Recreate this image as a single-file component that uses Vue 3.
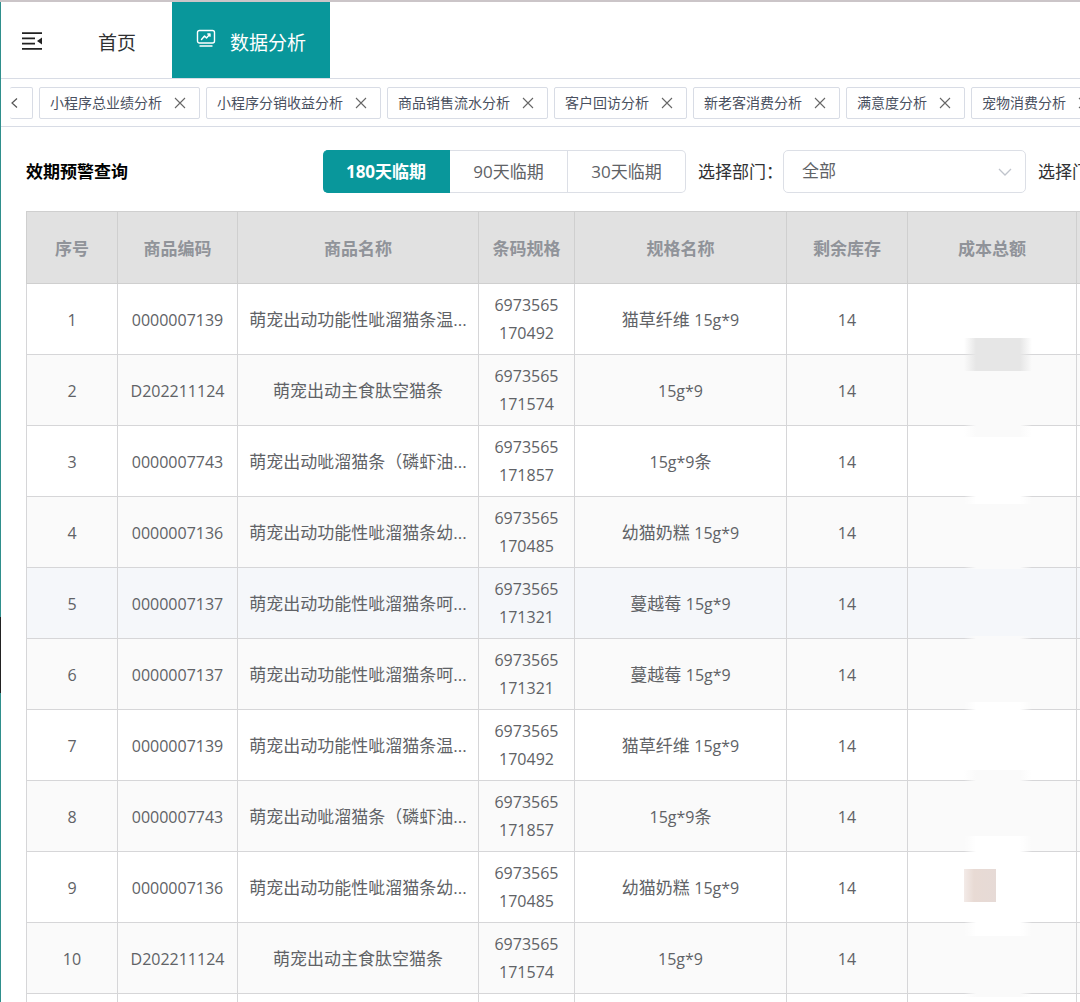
<script setup>
import { ref } from 'vue'

const tags = [
  '小程序总业绩分析',
  '小程序分销收益分析',
  '商品销售流水分析',
  '客户回访分析',
  '新老客消费分析',
  '满意度分析',
  '宠物消费分析',
]

const periods = ['180天临期', '90天临期', '30天临期']
const period = ref('180天临期')
const department = ref('全部')

const columns = ['序号', '商品编码', '商品名称', '条码规格', '规格名称', '剩余库存', '成本总额']

const products = {
  warm: { code: '0000007139', name: '萌宠出动功能性呲溜猫条温...', barcode: '6973565170492', flavor: '猫草纤维', pack: '15g*9', unit: '' },
  peptide: { code: 'D202211124', name: '萌宠出动主食肽空猫条', barcode: '6973565171574', flavor: '', pack: '15g*9', unit: '' },
  krill: { code: '0000007743', name: '萌宠出动呲溜猫条（磷虾油...', barcode: '6973565171857', flavor: '', pack: '15g*9', unit: '条' },
  kitten: { code: '0000007136', name: '萌宠出动功能性呲溜猫条幼...', barcode: '6973565170485', flavor: '幼猫奶糕', pack: '15g*9', unit: '' },
  care: { code: '0000007137', name: '萌宠出动功能性呲溜猫条呵...', barcode: '6973565171321', flavor: '蔓越莓', pack: '15g*9', unit: '' },
}
const rows = ['warm', 'peptide', 'krill', 'kitten', 'care', 'care', 'warm', 'krill', 'kitten', 'peptide']
  .map((key) => ({ ...products[key], stock: 14 }))
const hovered = 4

// Privacy masks over the cost amounts, measured from the top of the table
const masks = [
  { top: 127, height: 33, color: '#e6e6e6' },
  { top: 210, height: 16, color: '#fafafa' },
  { top: 280, height: 13, color: '#ffffff' },
  { top: 352, height: 6, color: '#fafafa' },
  { top: 425, height: 6, color: '#fafafa' },
  { top: 491, height: 12, color: '#ffffff' },
  { top: 559, height: 14, color: '#fafafa' },
  { top: 625, height: 20, color: '#ffffff' },
  { top: 704, height: 21, color: '#ffffff' },
  { top: 780, height: 6, color: '#fafafa' },
]
</script>

<template>
  <div class="app">
    <header class="topbar">
      <button class="fold" aria-label="收起菜单">
        <svg width="20" height="18" viewBox="0 0 20 18">
          <path d="M0 1.2h20M0 6.4h13M0 11.6h13M0 16.8h20" stroke="#222" stroke-width="1.8" fill="none" />
          <path d="M20 5.5v7L15 9z" fill="#222" />
        </svg>
      </button>
      <nav class="menu">
        <a class="menu-item" href="#home">首页</a>
        <a class="menu-item active" href="#analysis">
          <svg width="20" height="20" viewBox="0 0 20 20" fill="none" stroke="#fff" stroke-width="1.4" stroke-linecap="round" stroke-linejoin="round">
            <rect x="1.5" y="1.5" width="17" height="12.5" rx="2" />
            <path d="M5.5 10.5 8.5 7 10.5 9 14 5M11.8 5H14v2.2M4 17h12" />
          </svg>
          <span>数据分析</span>
        </a>
      </nav>
    </header>

    <div class="tagbar">
      <button class="scroll-left" aria-label="向左滚动">
        <svg width="8" height="12" viewBox="0 0 8 12"><path d="M7 1.5 2 6l5 4.5" fill="none" stroke="#555" stroke-width="1.2" /></svg>
      </button>
      <div v-for="tag in tags" :key="tag" class="tag">
        <a href="#tag">{{ tag }}</a>
        <button :aria-label="'关闭' + tag">
          <svg width="12" height="12" viewBox="0 0 12 12"><path d="m1 1 10 10M11 1 1 11" stroke="#666" stroke-width="1.1" /></svg>
        </button>
      </div>
    </div>

    <main class="content">
      <div class="toolbar">
        <h1>效期预警查询</h1>
        <div class="periods">
          <button v-for="p in periods" :key="p" :class="{ on: p === period }" @click="period = p">{{ p }}</button>
        </div>
        <label for="department">选择部门：</label>
        <div class="select">
          <select id="department" v-model="department">
            <option>全部</option>
          </select>
          <svg width="14" height="8" viewBox="0 0 14 8"><path d="m1 1 6 6 6-6" fill="none" stroke="#c0c4cc" stroke-width="1.3" /></svg>
        </div>
        <span class="store-label">选择门店：</span>
      </div>

      <div class="table-wrap">
        <table>
          <colgroup>
            <col class="c-index" />
            <col class="c-code" />
            <col class="c-name" />
            <col class="c-barcode" />
            <col class="c-spec" />
            <col class="c-stock" />
            <col class="c-cost" />
            <col />
          </colgroup>
          <thead>
            <tr>
              <th v-for="c in columns" :key="c">{{ c }}</th>
              <th class="rest"></th>
            </tr>
          </thead>
          <tbody>
            <tr v-for="(row, i) in rows" :key="i" :class="{ hovered: i === hovered }">
              <td class="num">{{ i + 1 }}</td>
              <td class="num">{{ row.code }}</td>
              <td class="name">{{ row.name }}</td>
              <td class="num barcode">{{ row.barcode }}</td>
              <td>{{ row.flavor }} <span class="num">{{ row.pack }}</span>{{ row.unit }}</td>
              <td class="num">{{ row.stock }}</td>
              <td></td>
              <td class="rest"></td>
            </tr>
            <tr>
              <td v-for="c in columns" :key="c"></td>
              <td class="rest"></td>
            </tr>
          </tbody>
        </table>
        <div class="masks" aria-hidden="true">
          <i
            v-for="m in masks"
            :key="m.top"
            class="mask"
            :style="{ top: m.top + 'px', height: m.height + 'px', '--tone': m.color }"
          ></i>
          <i class="mask swatch"></i>
        </div>
      </div>
    </main>
    <i class="edge" aria-hidden="true"></i>
  </div>
</template>

<style>
body {
  margin: 0;
}
</style>

<style scoped>
.app {
  position: relative;
  box-sizing: border-box;
  display: flex;
  flex-direction: column;
  height: 100vh;
  overflow: hidden;
  border-top: 2px solid #cbc5c8;
  background: #fff;
  color: #303133;
  font-family: "Open Sans", "Noto Sans CJK SC", sans-serif;
  font-size: 17px;
}
.app::before {
  content: "";
  position: absolute;
  top: 0;
  bottom: 0;
  left: 0;
  width: 1px;
  background: #2f8f8c;
}
button {
  padding: 0;
  border: 0;
  background: none;
  font: inherit;
  color: inherit;
  cursor: pointer;
}
a {
  color: inherit;
  text-decoration: none;
}
svg {
  display: block;
  flex: none;
}

.edge {
  position: absolute;
  left: 0;
  top: 615px;
  width: 1px;
  height: 76px;
  background: #222;
}

.topbar {
  display: flex;
  flex: none;
  height: 76px;
  border-bottom: 1px solid #d8dce5;
}
.fold {
  display: flex;
  align-items: center;
  padding: 2px 20px 0 22px;
}
.menu {
  display: flex;
  font-size: 19px;
}
.menu-item {
  display: flex;
  align-items: center;
  gap: 14px;
  padding: 4px 36px 0;
}
.menu-item.active {
  padding: 4px 24px 0;
  background: #09979b;
  color: #fff;
}
.menu-item.active svg {
  margin-bottom: 6px;
}

.tagbar {
  display: flex;
  flex: none;
  align-items: center;
  gap: 6px;
  height: 47px;
  overflow: hidden;
  border-bottom: 1px solid #d8dce5;
}
.scroll-left,
.tag {
  box-sizing: border-box;
  display: flex;
  flex: none;
  align-items: center;
  height: 32px;
  border: 1px solid #d8dce5;
  border-radius: 2px;
}
.scroll-left {
  width: 23px;
  margin-left: 10px;
  border-left: 0;
}
.tag {
  gap: 12px;
  padding: 0 13px 0 10px;
  color: #495060;
  font-size: 14px;
}
.tag a {
  padding-bottom: 2px;
}

.content {
  flex: 1;
  min-height: 0;
  padding: 23px 0 0 26px;
  overflow: hidden;
}
.toolbar {
  display: flex;
  align-items: center;
  height: 43px;
  margin-bottom: 18px;
  overflow: hidden;
  white-space: nowrap;
}
h1,
label,
.store-label {
  padding-bottom: 2px;
}
h1 {
  flex: 0 0 297px;
  margin: 0;
  color: #000;
  font-size: 17px;
}
.periods {
  display: flex;
  flex: none;
  margin-right: 12px;
}
.periods button {
  box-sizing: border-box;
  width: 118px;
  height: 43px;
  padding-bottom: 2px;
  border: 1px solid #dcdfe6;
  border-left: 0;
  color: #606266;
}
.periods button:first-child {
  width: 127px;
  border-radius: 5px 0 0 5px;
}
.periods button:last-child {
  border-radius: 0 5px 5px 0;
}
.periods .on {
  border-color: #09979b;
  background: #09979b;
  color: #fff;
  font-weight: bold;
}
.select {
  position: relative;
  flex: 0 0 243px;
  margin-right: 12px;
}
select {
  display: block;
  width: 100%;
  height: 43px;
  padding: 0 40px 2px 18px;
  border: 1px solid #dcdfe6;
  border-radius: 5px;
  background: #fff;
  color: #606266;
  font: inherit;
  appearance: none;
}
.select svg {
  position: absolute;
  right: 14px;
  top: 18px;
  pointer-events: none;
}

.table-wrap {
  position: relative;
}
table {
  width: 100%;
  border-collapse: collapse;
  table-layout: fixed;
  color: #606266;
  line-height: 28px;
}
.c-index { width: 91px; }
.c-code { width: 120px; }
.c-name { width: 241px; }
.c-barcode { width: 96px; }
.c-spec { width: 212px; }
.c-stock { width: 121px; }
.c-cost { width: 169px; }
th,
td {
  box-sizing: border-box;
  height: 71px;
  padding: 2px 10px 0;
  border: 1px solid #d6d6d8;
  text-align: center;
}
th {
  height: 72px;
  background: #e1e1e1;
  border-color: #cfcfcf;
  color: #909399;
}
.rest {
  padding: 0;
  border-right: 0;
}
tbody tr:nth-child(even) {
  background: #fafafa;
}
tbody tr.hovered {
  background: #f5f7fa;
}
.num {
  font-size: 16px;
}
.name {
  white-space: nowrap;
}
.barcode {
  padding: 0 12px;
  word-break: break-all;
}

.masks {
  position: absolute;
  top: 0;
  left: 938px;
  width: 68px;
}
.mask {
  position: absolute;
  left: 0;
  width: 100%;
  background: linear-gradient(90deg, transparent, var(--tone) 12px, var(--tone) 56px, transparent);
}
.swatch {
  top: 658px;
  width: 32px;
  height: 33px;
  background: linear-gradient(90deg, #f3ebe8, #e8dad4 10px, #e6dad6);
}
</style>
